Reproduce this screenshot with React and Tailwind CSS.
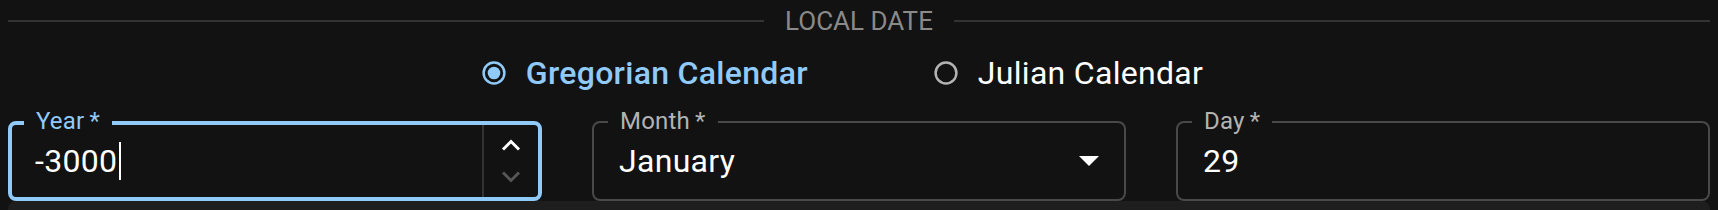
import { useState } from 'react';

const MONTHS = ['January', 'February', 'March'];

function RadioIcon({ checked }) {
  return (
    <svg width="24" height="24" viewBox="0 0 24 24" className="shrink-0">
      <circle
        cx="12"
        cy="12"
        r="10.4"
        fill="none"
        stroke={checked ? '#90caf9' : '#b3b3b3'}
        strokeWidth="2.5"
      />
      {checked && <circle cx="12" cy="12" r="6.3" fill="#90caf9" />}
    </svg>
  );
}

function CalendarOption({ label, checked, className }) {
  return (
    <label className={['flex items-center', className].join(' ')}>
      <RadioIcon checked={checked} />
      <span
        className={[
          'ml-[20px] text-[32px] leading-none tracking-[0.3px]',
          checked ? 'font-medium text-[#90caf9]' : 'font-normal text-white',
        ].join(' ')}
      >
        {label}
      </span>
    </label>
  );
}

function FieldLabel({ children, focused }) {
  return (
    <span
      className={[
        'absolute left-[16px] top-[-14px] bg-[#121212] px-[12px] text-[24px] leading-[28px] tracking-[0.2px]',
        focused ? 'text-[#90caf9]' : 'text-[#b3b3b3]',
      ].join(' ')}
    >
      {children}
    </span>
  );
}

function YearField() {
  return (
    <div className="relative">
      <div className="flex h-[80px] items-stretch rounded-[8px] border-4 border-[#90caf9]">
        <div className="flex flex-1 items-center pl-[23px]">
          <span className="text-[32px] leading-none tracking-[0.3px] text-white">-3000</span>
          <span className="ml-[2px] h-[38px] w-[2px] bg-white" />
        </div>
        <div className="flex w-[56px] flex-col items-center justify-center gap-[20px] border-l-2 border-[#333]">
          <svg width="20" height="12" viewBox="0 0 20 12">
            <polyline points="2,10.5 10,2.5 18,10.5" fill="none" stroke="#fff" strokeWidth="3" />
          </svg>
          <svg width="20" height="12" viewBox="0 0 20 12">
            <polyline points="2,1.5 10,9.5 18,1.5" fill="none" stroke="#555" strokeWidth="3" />
          </svg>
        </div>
      </div>
      <FieldLabel focused>Year{'\u2009'}*</FieldLabel>
    </div>
  );
}

function MonthField() {
  const [month] = useState(MONTHS[0]);
  return (
    <div className="relative">
      <div className="flex h-[80px] items-center justify-between rounded-[8px] border-2 border-[#494949] pl-[25px] pr-[25px]">
        <span className="text-[32px] leading-none tracking-[0.3px] text-white">{month}</span>
        <svg width="20" height="10" viewBox="0 0 20 10">
          <path d="M0 0 L20 0 L10 10 Z" fill="#fff" />
        </svg>
      </div>
      <FieldLabel>Month{'\u2009'}*</FieldLabel>
    </div>
  );
}

function DayField() {
  return (
    <div className="relative">
      <div className="flex h-[80px] items-center rounded-[8px] border-2 border-[#494949] pl-[25px]">
        <span className="text-[32px] leading-none tracking-[0.3px] text-white">29</span>
      </div>
      <FieldLabel>Day{'\u2009'}*</FieldLabel>
    </div>
  );
}

export default function App() {
  return (
    <div className="h-[210px] overflow-hidden bg-[#121212] px-[8px] [font-family:Roboto,sans-serif]">
      <div className="flex h-[42px] items-center">
        <div className="h-[2px] flex-1 bg-[#333]" />
        <span className="px-[21px] text-[26px] leading-none text-[#8a8a8a]">LOCAL DATE</span>
        <div className="h-[2px] flex-1 bg-[#333]" />
      </div>

      <div className="flex h-[62px] items-center justify-center">
        <CalendarOption label="Gregorian Calendar" checked className="mr-[126px]" />
        <CalendarOption label="Julian Calendar" className="mr-[33px]" />
      </div>

      <div className="mt-[17px] grid grid-cols-3 gap-[50px]">
        <YearField />
        <MonthField />
        <DayField />
      </div>

      <div className="h-[20px] rounded-t-[8px] bg-[#1e1e1e]" />
    </div>
  );
}
